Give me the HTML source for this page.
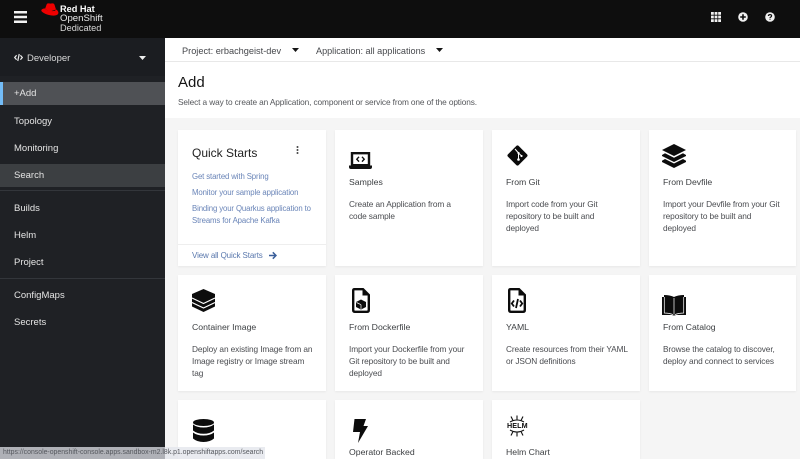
<!DOCTYPE html>
<html><head><meta charset="utf-8"><style>
*{box-sizing:border-box}
html,body{margin:0;padding:0}
body{width:800px;height:459px;overflow:hidden;position:relative;background:#f5f5f5;font-family:"Liberation Sans",sans-serif;color:#151515}
#w{position:absolute;left:0;top:0;width:800px;height:459px;filter:blur(.3px)}
.a{position:absolute;white-space:nowrap}
#top{left:0;top:0;width:800px;height:38px;background:#0e0e0e}
#side{left:0;top:38px;width:165px;height:421px;background:#1f2125}
#ctx{left:165px;top:38px;width:635px;height:24px;background:#fff;border-bottom:1px solid #e8e8e8}
#hd{left:165px;top:62px;width:635px;height:56px;background:#fff}
.n{left:14px;color:#e4e4e4;font-size:9.5px;line-height:12px}
.hr{left:0;width:165px;height:1px;background:#33363b}
.c{position:absolute;background:#fff;box-shadow:0 1px 2px rgba(0,0,0,.06)}
.t{position:absolute;white-space:nowrap;color:#3c3f42;font-size:8.7px;line-height:12px}
.d{position:absolute;white-space:nowrap;color:#4a4c50;font-size:8.3px;letter-spacing:-.1px;line-height:12px}
.l{position:absolute;white-space:nowrap;color:#6a85b8;font-size:7.8px;letter-spacing:-.12px;line-height:12px}
svg{position:absolute;display:block}
</style></head><body><div id="w">
<div class="a" id="top"></div>
<svg style="left:14px;top:11px" width="13" height="12" viewBox="0 0 13 12"><path d="M0 0h13v2.500H0zM0 4.750h13v2.500H0zM0 9.500h13V12H0z" fill="#f2f2f2"/></svg>
<svg style="left:41px;top:3px" width="18" height="13" viewBox="0 0 18 13"><path d="M4 6 5.600 1.500Q6 0 8 .4 9.500.8 11 .4 13 0 13.500 1.800L15 6.500 9 8.500z" fill="#e00"/><path d="M3.800 5.400C1 5.800-.5 7 .8 8.500 3 11 11 13.500 15 12.300 18.500 11.300 18 8 14.800 6.200 15 7.800 12.500 8.500 9 7.800 6.500 7.300 4.300 6.500 3.800 5.400Z" fill="#e00"/></svg>
<div class="a" style="left:60px;top:3px;color:#fff;font-size:9.2px;font-weight:bold;line-height:12px">Red Hat</div>
<div class="a" style="left:60px;top:13px;color:#e8e8e8;font-size:9.6px;line-height:11px">OpenShift</div>
<div class="a" style="left:60px;top:23px;color:#d8d8d8;font-size:9.2px;line-height:11px">Dedicated</div>
<svg style="left:711px;top:12px" width="10" height="10" viewBox="0 0 10 10" fill="#f0f0f0"><path d="M0 0h2.800v2.800H0zM3.600 0h2.800v2.800H3.600zM7.200 0H10v2.800H7.200zM0 3.600h2.800v2.800H0zM3.600 3.600h2.800v2.800H3.600zM7.200 3.600H10v2.800H7.200zM0 7.200h2.800V10H0zM3.600 7.200h2.800V10H3.600zM7.200 7.200H10V10H7.200z"/></svg>
<svg style="left:738px;top:12px" width="10" height="10" viewBox="0 0 10 10"><circle cx="5" cy="5" r="4.800" fill="#f0f0f0"/><path d="M4.200 2.200h1.600v2h2v1.600h-2v2H4.200v-2h-2V4.200h2z" fill="#0e0e0e"/></svg>
<svg style="left:765px;top:12px" width="10" height="10" viewBox="0 0 10 10"><circle cx="5" cy="5" r="4.800" fill="#f0f0f0"/><path d="M3.400 4Q3.400 2.600 5 2.600 6.600 2.600 6.600 3.800 6.600 4.600 5.800 5 5 5.400 5 6" fill="none" stroke="#0e0e0e" stroke-width="1.200"/><path d="M4.400 6.700h1.200v1H4.400z" fill="#0e0e0e"/></svg>

<div class="a" id="side"></div>
<div class="a" style="left:0;top:38px;width:165px;height:38px;background:#1b1d21"></div>
<svg style="left:14px;top:53px" width="9" height="9" viewBox="0 0 9 9"><path d="M2.600 2.300.7 4.500 2.600 6.700M6.400 2.300 8.300 4.500 6.400 6.700M5.200 1 3.800 8" fill="none" stroke="#ececec" stroke-width="1.200"/></svg>
<div class="a" style="left:27px;top:52px;color:#d8d8d8;font-size:9.5px;line-height:13px">Developer</div>
<svg style="left:139px;top:56px" width="7" height="4" viewBox="0 0 7 4"><path d="M0 0h7L3.500 4z" fill="#eee"/></svg>
<div class="a" style="left:0;top:82px;width:165px;height:23px;background:#4f5155"></div>
<div class="a" style="left:0;top:82px;width:3px;height:23px;background:#73bcf7"></div>
<div class="a n" style="top:88px">+Add</div>
<div class="a n" style="top:116px">Topology</div>
<div class="a n" style="top:143px">Monitoring</div>
<div class="a" style="left:0;top:164px;width:165px;height:23px;background:#3c3f42"></div>
<div class="a n" style="top:170px">Search</div>
<div class="a hr" style="top:190px"></div>
<div class="a n" style="top:203px">Builds</div>
<div class="a n" style="top:230px">Helm</div>
<div class="a n" style="top:257px">Project</div>
<div class="a hr" style="top:278px"></div>
<div class="a n" style="top:290px">ConfigMaps</div>
<div class="a n" style="top:317px">Secrets</div>

<div class="a" id="ctx"></div>
<div class="a" style="left:182px;top:45px;color:#46484c;font-size:9.2px;line-height:12px">Project: erbachgeist-dev</div>
<svg style="left:292px;top:48px" width="7" height="4" viewBox="0 0 7 4"><path d="M0 0h7L3.500 4z" fill="#151515"/></svg>
<div class="a" style="left:316px;top:45px;color:#46484c;font-size:9.1px;line-height:12px">Application: all applications</div>
<svg style="left:436px;top:48px" width="7" height="4" viewBox="0 0 7 4"><path d="M0 0h7L3.500 4z" fill="#151515"/></svg>
<div class="a" id="hd"></div>
<div class="a" style="left:178px;top:74px;color:#151515;font-size:15px;line-height:18px">Add</div>
<div class="a" style="left:178px;top:96px;color:#55575b;font-size:8.3px;letter-spacing:-.12px;line-height:12px">Select a way to create an Application, component or service from one of the options.</div>

<div class="c" style="left:178px;top:130px;width:148px;height:136px"></div>
<div class="a" style="left:192px;top:146px;color:#222;font-size:12px;line-height:15px">Quick Starts</div>
<svg style="left:296px;top:146px" width="3" height="8" viewBox="0 0 3 8" fill="#444"><circle cx="1.500" cy="1" r="1"/><circle cx="1.500" cy="4" r="1"/><circle cx="1.500" cy="7" r="1"/></svg>
<div class="l" style="left:192px;top:171px">Get started with Spring</div>
<div class="l" style="left:192px;top:187px">Monitor your sample application</div>
<div class="l" style="left:192px;top:203px">Binding your Quarkus application to</div>
<div class="l" style="left:192px;top:215px">Streams for Apache Kafka</div>
<div class="a" style="left:178px;top:244px;width:148px;height:1px;background:#eee"></div>
<div class="l" style="left:192px;top:250px;color:#5a78ad;font-size:8px">View all Quick Starts</div>
<svg style="left:269px;top:251px" width="8" height="9" viewBox="0 0 8 9"><path d="M0 4.500h6.500M3.800 1.300 7 4.500 3.800 7.700" fill="none" stroke="#3a5f9a" stroke-width="1.500"/></svg>

<div class="c" style="left:335px;top:130px;width:148px;height:136px"></div>
<svg style="left:349px;top:152px" width="23" height="17" viewBox="0 0 23 17"><path d="M3 1.200h17v12H3z" fill="#fff" stroke="#111" stroke-width="2.400"/><path d="M0 13.500h23v1.500q0 2-2 2H2Q0 17 0 15z" fill="#111"/><path d="M10 4.800 7.800 7.200 10 9.600M13 4.800 15.200 7.200 13 9.600" fill="none" stroke="#111" stroke-width="1.400"/></svg>
<div class="t" style="left:349px;top:176px">Samples</div>
<div class="d" style="left:349px;top:198px">Create an Application from a</div>
<div class="d" style="left:349px;top:210px">code sample</div>

<div class="c" style="left:492px;top:130px;width:148px;height:136px"></div>
<svg style="left:507px;top:145px" width="21" height="21" viewBox="0 0 21 21"><path d="M9.500 .8Q10.500 0 11.500 .8L20.200 9.500Q21 10.500 20.200 11.500L11.500 20.200Q10.500 21 9.500 20.200L.8 11.500Q0 10.500 .8 9.500z" fill="#0a0a0a"/><path d="M8 4 11.500 8V14M11.500 8 14.500 11" stroke="#fff" stroke-width="1" fill="none"/><circle cx="11.500" cy="14.500" r="1.300" fill="#fff"/><circle cx="11.500" cy="8" r="1.100" fill="#fff"/><circle cx="14.500" cy="11" r="1.100" fill="#fff"/></svg>
<div class="t" style="left:506px;top:176px">From Git</div>
<div class="d" style="left:506px;top:198px">Import code from your Git</div>
<div class="d" style="left:506px;top:210px">repository to be built and</div>
<div class="d" style="left:506px;top:222px">deployed</div>

<div class="c" style="left:649px;top:130px;width:147px;height:136px"></div>
<svg style="left:662px;top:144px" width="24" height="24" viewBox="0 0 24 24" fill="#0c0c0c"><path d="M12 0 24 6 12 12 0 6z"/><path d="M3 9.200 12 13.700 21 9.200 24 11V12L12 18 0 12V11z"/><path d="M3 15 12 19.500 21 15 24 16.800V18L12 24 0 18V16.800z"/></svg>
<div class="t" style="left:663px;top:176px">From Devfile</div>
<div class="d" style="left:663px;top:198px">Import your Devfile from your Git</div>
<div class="d" style="left:663px;top:210px">repository to be built and</div>
<div class="d" style="left:663px;top:222px">deployed</div>

<div class="c" style="left:178px;top:275px;width:148px;height:116px"></div>
<svg style="left:192px;top:289px" width="23" height="23" viewBox="0 0 23 23"><path d="M11.500 0 23 5V17.500L11.500 23 0 17.500V5z" fill="#0c0c0c"/><path d="M0 9 11.500 14.500 23 9M0 13.500 11.500 19 23 13.500" fill="none" stroke="#fff" stroke-width="1.200"/></svg>
<div class="t" style="left:192px;top:321px">Container Image</div>
<div class="d" style="left:192px;top:343px">Deploy an existing Image from an</div>
<div class="d" style="left:192px;top:355px">Image registry or Image stream</div>
<div class="d" style="left:192px;top:367px">tag</div>

<div class="c" style="left:335px;top:275px;width:148px;height:116px"></div>
<svg style="left:352px;top:288px" width="18" height="25" viewBox="0 0 18 25"><path d="M2.500 1.200h8.500L16.800 7V22q0 1.800-1.800 1.800H3Q1.200 23.800 1.200 22V2.500Q1.200 1.200 2.500 1.200z" fill="#fff" stroke="#0c0c0c" stroke-width="2.400"/><path d="M10.500 1v6.500h6.500z" fill="#0c0c0c"/><path d="M9 11.500 14 14V19L9 21.500 4 19V14z" fill="#0c0c0c"/><path d="M4.500 14.500 9 16.700M9 16.700V21" stroke="#fff" stroke-width=".7" fill="none"/></svg>
<div class="t" style="left:349px;top:321px">From Dockerfile</div>
<div class="d" style="left:349px;top:343px">Import your Dockerfile from your</div>
<div class="d" style="left:349px;top:355px">Git repository to be built and</div>
<div class="d" style="left:349px;top:367px">deployed</div>

<div class="c" style="left:492px;top:275px;width:148px;height:116px"></div>
<svg style="left:508px;top:288px" width="18" height="25" viewBox="0 0 18 25"><path d="M2.500 1.200h8.500L16.800 7V22q0 1.800-1.800 1.800H3Q1.200 23.800 1.200 22V2.500Q1.200 1.200 2.500 1.200z" fill="#fff" stroke="#0c0c0c" stroke-width="2.400"/><path d="M10.500 1v6.500h6.500z" fill="#0c0c0c"/><path d="M6 12.500 3.800 15.500 6 18.500M12 12.500 14.200 15.500 12 18.500M10 11 8 20" fill="none" stroke="#0c0c0c" stroke-width="1.800"/></svg>
<div class="t" style="left:506px;top:321px">YAML</div>
<div class="d" style="left:506px;top:343px">Create resources from their YAML</div>
<div class="d" style="left:506px;top:355px">or JSON definitions</div>

<div class="c" style="left:649px;top:275px;width:147px;height:116px"></div>
<svg style="left:662px;top:295px" width="24" height="21" viewBox="0 0 24 21"><path d="M0 2H2V0Q8 0 12 2 16 0 22 0V2H24V20H14Q12 21 10 20H0z" fill="#0c0c0c"/><path d="M12 3V19.500M2.300 2V18Q7 18 11 19.500M21.700 2V18Q17 18 13 19.500" fill="none" stroke="#fff" stroke-width=".7"/></svg>
<div class="t" style="left:663px;top:321px">From Catalog</div>
<div class="d" style="left:663px;top:343px">Browse the catalog to discover,</div>
<div class="d" style="left:663px;top:355px">deploy and connect to services</div>

<div class="c" style="left:178px;top:400px;width:148px;height:59px"></div>
<svg style="left:193px;top:419px" width="21" height="23" viewBox="0 0 21 23" fill="#0c0c0c"><ellipse cx="10.500" cy="3.500" rx="10.500" ry="3.500"/><path d="M0 5.500Q4 8.500 10.500 8.500 17 8.500 21 5.500V11.500Q17 14.800 10.500 14.800 4 14.800 0 11.500z"/><path d="M0 13.500Q4 16.500 10.500 16.500 17 16.500 21 13.500V19.500Q17 23 10.500 23 4 23 0 19.500z"/></svg>

<div class="c" style="left:335px;top:400px;width:148px;height:59px"></div>
<svg style="left:353px;top:419px" width="15" height="24" viewBox="0 0 15 24"><path d="M1.500 0H13L10.500 7H15L5 24 7 13H0z" fill="#0c0c0c"/></svg>
<div class="t" style="left:349px;top:446px">Operator Backed</div>

<div class="c" style="left:492px;top:400px;width:148px;height:59px"></div>
<svg style="left:506px;top:415px" width="22" height="8" viewBox="0 0 22 8"><path d="M4 7Q11 3 18 7M11 .5V4.500M5 1.500 7 5.500M17 1.500 15 5.500" stroke="#111" stroke-width="1.100" fill="none"/></svg>
<div class="a" style="left:507px;top:421px;color:#0c0c0c;font-size:7.2px;font-weight:bold;line-height:9px;letter-spacing:.1px">HELM</div>
<svg style="left:506px;top:429px" width="22" height="8" viewBox="0 0 22 8"><path d="M4 1Q11 5 18 1M11 7.500V3.500M5 6.500 7 2.500M17 6.500 15 2.500" stroke="#111" stroke-width="1.100" fill="none"/></svg>
<div class="t" style="left:506px;top:446px">Helm Chart</div>

<div class="a" style="left:0;top:447px;width:265px;height:12px;background:rgba(225,228,235,.74)"></div>
<div class="a" style="left:3px;top:448px;color:#55585e;font-size:6.9px;line-height:10px">https://console-openshift-console.apps.sandbox-m2.l8k.p1.openshiftapps.com/search</div>
</div></body></html>
